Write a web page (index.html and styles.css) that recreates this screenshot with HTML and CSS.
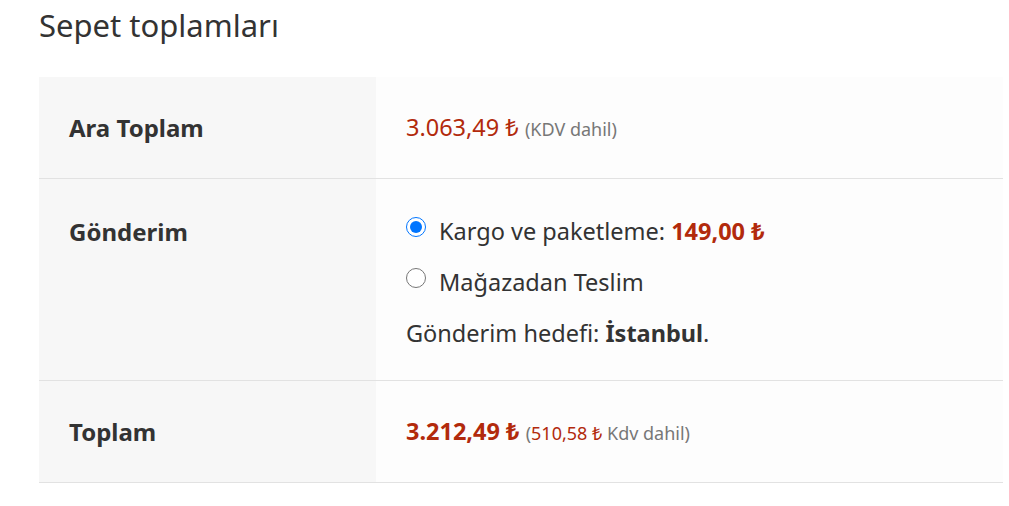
FILE: index.html
```html
<!DOCTYPE html>
<html lang="tr">
<head>
  <meta charset="UTF-8" />
  <meta name="viewport" content="width=device-width, initial-scale=1" />
  <title>Sepet toplamları</title>
  <link rel="stylesheet" href="styles.css">
</head>
<body>
  <div class="cart-totals">
    <h2>Sepet toplamları</h2>
    <table class="totals-table">
      <tr class="subtotal">
        <th>Ara Toplam</th>
        <td><span class="amount">3.063,49 ₺</span> <small class="tax">(KDV dahil)</small></td>
      </tr>
      <tr class="shipping">
        <th>Gönderim</th>
        <td>
          <ul class="shipping-methods">
            <li>
              <input type="radio" name="ship" id="ship1" checked>
              <label for="ship1">Kargo ve paketleme: <strong class="amount">149,00 ₺</strong></label>
            </li>
            <li>
              <input type="radio" name="ship" id="ship2">
              <label for="ship2">Mağazadan Teslim</label>
            </li>
          </ul>
          <p class="destination">Gönderim hedefi: <strong>İstanbul</strong>.</p>
        </td>
      </tr>
      <tr class="order-total">
        <th>Toplam</th>
        <td><strong class="amount">3.212,49 ₺</strong> <small class="tax">(<span class="amount">510,58 ₺</span> Kdv dahil)</small></td>
      </tr>
    </table>
  </div>
</body>
</html>
```

FILE: styles.css
```css
* {
  margin: 0;
  padding: 0;
  box-sizing: border-box;
}
body {
  font-family: 'Noto Sans', 'Open Sans', sans-serif;
  background: #fff;
  color: #333;
}
.cart-totals {
  padding: 0 6px 0 39px;
}
.cart-totals h2 {
  font-size: 31px;
  font-weight: 400;
  line-height: 50px;
  margin-bottom: 27px;
  color: #333;
}

/* Totals table */
.totals-table {
  width: 100%;
  border-collapse: collapse;
  font-size: 23.5px;
  line-height: 29px;
}
.totals-table tr {
  border-bottom: 1px solid #e2e2e2;
}
.totals-table th {
  width: 337px;
  background: #f7f7f7;
  text-align: left;
  vertical-align: top;
  font-weight: 700;
  font-size: 24px;
  padding: 36px 30px;
}
.totals-table td {
  background: #fdfdfd;
  vertical-align: top;
  padding: 36px 30px;
}
.totals-table .shipping th,
.totals-table .shipping td {
  padding-top: 38px;
  padding-bottom: 32px;
}
.amount {
  color: #b22a0c;
}
strong.amount {
  font-weight: 700;
}
.tax {
  font-size: 18px;
  line-height: 1;
  color: #777;
}

/* Shipping */
.shipping-methods {
  list-style: none;
}
.shipping-methods li {
  display: flex;
  align-items: center;
  gap: 13px;
  margin-bottom: 22px;
}
.shipping-methods input {
  width: 20px;
  height: 20px;
  margin: 0;
  position: relative;
  top: -5px;
}
.destination strong {
  font-weight: 700;
}
```
